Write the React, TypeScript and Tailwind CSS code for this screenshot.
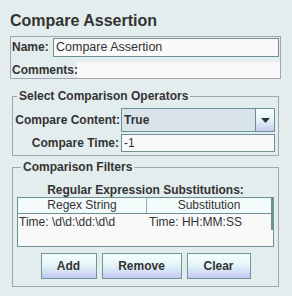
import React from "react";

const font = { fontFamily: '"Liberation Sans", Arial, sans-serif' };

function Btn({ label, w }: { label: string; w: string }) {
  return (
    <button
      className={`${w} h-[26px] border border-[#6e9696] bg-linear-to-b from-[#f6ffff] via-[#e2f4f8] to-[#c4c8f2] text-[12px] font-bold text-[#333] leading-[24px]`}
    >
      {label}
    </button>
  );
}

export default function App() {
  return (
    <div
      className="w-[292px] h-[296px] bg-[#e3eded] text-[#333] overflow-hidden flex flex-col"
      style={font}
    >
      <div className="pt-[11px] pl-[10px] text-[16px] font-bold leading-[20px] text-[#333]">
        Compare Assertion
      </div>

      <div className="mt-[5px] ml-[10px] mr-[11px] border border-[#a6a2b0] flex flex-col">
        <div className="flex items-center pt-[1px] pr-[1px]">
          <span className="pl-[1px] w-[42px] text-[12px] font-bold leading-[19px]">Name:</span>
          <div className="flex-1 h-[19px] border border-[#6a9292] bg-[#f9f9f9] text-[12.5px] leading-[17px] pl-[2px]">
            Compare Assertion
          </div>
        </div>
        <div className="flex mt-[5px] h-[16px]">
          <span className="pl-[1px] w-[66px] text-[12px] font-bold leading-[16px]">Comments:</span>
          <div className="flex-1 bg-[#f8f8f8]" />
        </div>
      </div>

      <fieldset className="mt-[10px] ml-[12px] mr-[13px] border border-[#a6a2b0] pr-[3px] pt-[5px] pb-[3px]">
        <legend className="ml-[4px] px-[2px] text-[12px] font-bold leading-[14px]">
          Select Comparison Operators
        </legend>
        <div className="flex items-center">
          <span className="w-[108px] text-right pr-[1px] text-[12px] font-bold">Compare Content:</span>
          <div className="flex-1 h-[24px] border border-[#6a9292] bg-[#d9e4ea] flex">
            <span className="flex-1 pl-[2px] text-[12px] font-bold leading-[22px]">True</span>
            <div className="w-[19px] h-full border-l border-[#6a9292] bg-linear-to-b from-[#f6ffff] via-[#e2f4f8] to-[#c8ccf2] flex items-center justify-center">
              <svg width="9" height="5" viewBox="0 0 9 5">
                <path d="M0 0 H9 L4.5 5 Z" fill="#333" />
              </svg>
            </div>
          </div>
        </div>
        <div className="flex items-center mt-[2px]">
          <span className="w-[108px] text-right pr-[2px] text-[12px] font-bold">Compare Time:</span>
          <div className="flex-1 h-[18px] border border-[#6a9292] bg-[#f9f9f9] text-[12px] leading-[16px] pl-[2px]">
            -1
          </div>
        </div>
      </fieldset>

      <fieldset className="mt-[4px] ml-[12px] mr-[13px] border border-[#a6a2b0] pt-[9px] pb-[7px] px-[4px] flex flex-col">
        <legend className="ml-[4px] px-[2px] text-[12px] font-bold leading-[14px]">
          Comparison Filters
        </legend>
        <div className="text-center text-[12px] font-bold leading-[14px]">
          Regular Expression Substitutions:
        </div>
        <div className="h-[50px] border border-[#6a9292] bg-[#f9f9f9] flex flex-col">
          <div className="flex h-[16px] border-b border-[#6a9292] text-[12px] leading-[15px]">
            <div className="w-[129px] text-center border-r border-[#8fb0b0] bg-[#f4fbfb]">Regex String</div>
            <div className="flex-1 text-center bg-[#f4fbfb] border-r-2 border-[#6a9292]">Substitution</div>
          </div>
          <div className="flex h-[16px] text-[12px] leading-[16px]">
            <div className="w-[129px] pl-[1px]">Time: \d\d:\dd:\d\d</div>
            <div className="flex-1 pl-[2px] border-r-2 border-[#6a9292]">Time: HH:MM:SS</div>
          </div>
        </div>
        <div className="mt-[6px] flex justify-center gap-[5px]">
          <Btn label="Add" w="w-[56px]" />
          <Btn label="Remove" w="w-[80px]" />
          <Btn label="Clear" w="w-[64px]" />
        </div>
      </fieldset>
    </div>
  );
}
